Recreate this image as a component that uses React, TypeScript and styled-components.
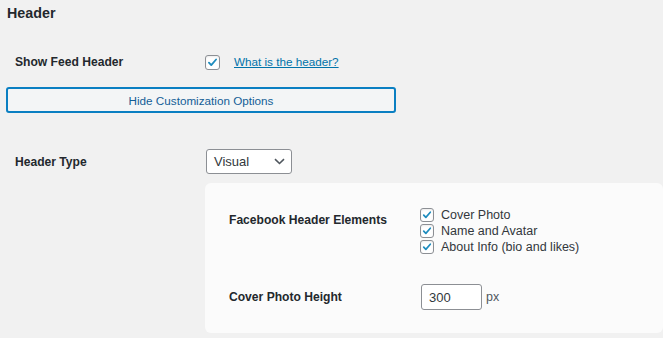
import React from 'react';
import styled, { createGlobalStyle } from 'styled-components';

const GlobalStyle = createGlobalStyle`
  html, body {
    margin: 0;
    padding: 0;
    background: #f1f1f1;
  }
  body {
    font-family: "Liberation Sans", Arial, sans-serif;
    color: #23282d;
  }
`;

const Page = styled.div`
  width: 663px;
  height: 338px;
  overflow: hidden;
  background: #f1f1f1;
  display: flex;
  flex-direction: column;
`;

const Title = styled.h3`
  margin: 4px 0 0 7px;
  font-size: 14.3px;
  line-height: 18px;
  font-weight: 700;
  color: #23282d;
`;

const Row = styled.div<{ $top: number }>`
  display: flex;
  align-items: center;
  margin-top: ${p => p.$top}px;
  padding-left: 15px;
`;

const Label = styled.div<{ $width: number; $pad?: number }>`
  width: ${p => p.$width}px;
  flex-shrink: 0;
  padding-top: ${p => p.$pad ?? 0}px;
  font-size: 12.1px;
  font-weight: 700;
  color: #23282d;
  line-height: 16px;
`;

const Box = styled.span<{ $size: number }>`
  display: inline-flex;
  align-items: center;
  justify-content: center;
  box-sizing: border-box;
  width: ${p => p.$size}px;
  height: ${p => p.$size}px;
  flex-shrink: 0;
  background: #ffffff;
  border: 1px solid #8c8f94;
  border-radius: 3px;
  box-shadow: inset 0 1px 2px rgba(0, 0, 0, 0.08);
`;

const HelpLink = styled.a`
  margin-left: 14px;
  font-size: 11.7px;
  color: #0073aa;
  text-decoration: underline;
  line-height: 16px;
`;

const ToggleButton = styled.button`
  margin: 17px 0 0 6px;
  width: 390px;
  height: 26px;
  box-sizing: border-box;
  background: #f3f5f6;
  border: 2px solid #0a7fc2;
  border-radius: 3px;
  font-family: "Liberation Sans", Arial, sans-serif;
  font-size: 11.7px;
  color: #135e96;
  padding: 0;
  text-align: center;
`;

const Select = styled.div`
  display: flex;
  align-items: center;
  justify-content: space-between;
  box-sizing: border-box;
  width: 86px;
  height: 25px;
  padding: 0 6px 0 7px;
  background: #ffffff;
  border: 1px solid #8c8f94;
  border-radius: 3px;
  font-size: 13px;
  color: #32373c;
`;

const Card = styled.div`
  margin: 9px 0 0 205px;
  width: 458px;
  height: 150px;
  flex-shrink: 0;
  box-sizing: border-box;
  background: #fbfbfb;
  border-radius: 6px;
  padding: 24px 0 0 24px;
  display: flex;
  flex-direction: column;
`;

const CardRow = styled.div<{ $top: number; $align: string }>`
  display: flex;
  align-items: ${p => p.$align};
  margin-top: ${p => p.$top}px;
`;

const CheckList = styled.div`
  display: flex;
  flex-direction: column;
`;

const CheckItem = styled.label`
  display: flex;
  align-items: center;
  height: 16px;
  font-size: 12.5px;
  color: #32373c;
  gap: 7px;
`;

const NumberInput = styled.div`
  display: flex;
  align-items: center;
  box-sizing: border-box;
  width: 61px;
  height: 26px;
  padding-left: 7px;
  background: #ffffff;
  border: 1px solid #8c8f94;
  border-radius: 3px;
  font-size: 13px;
  color: #32373c;
`;

const Unit = styled.span`
  margin-left: 4px;
  font-size: 12.5px;
  color: #50575e;
`;

const Check: React.FC<{ size: number }> = ({ size }) => (
  <Box $size={size}>
    <svg width={size - 2} height={size - 2} viewBox="0 0 20 20">
      <path
        d="M4.5 10.2l3.6 3.8 7.4-8.6"
        fill="none"
        stroke="#1e8cbe"
        strokeWidth="2.8"
        strokeLinecap="round"
        strokeLinejoin="round"
      />
    </svg>
  </Box>
);

const Chevron = () => (
  <svg width="11" height="7" viewBox="0 0 11 7">
    <path d="M1 1.2l4.5 4.3 4.5-4.3" fill="none" stroke="#50575e" strokeWidth="1.6" />
  </svg>
);

const elements = ['Cover Photo', 'Name and Avatar', 'About Info (bio and likes)'];

const App: React.FC = () => {
  return (
    <Page>
      <GlobalStyle />
      <Title>Header</Title>
      <Row $top={32}>
        <Label $width={190}>Show Feed Header</Label>
        <Check size={15} />
        <HelpLink href="#">What is the header?</HelpLink>
      </Row>
      <ToggleButton>Hide Customization Options</ToggleButton>
      <Row $top={36}>
        <Label $width={191}>Header Type</Label>
        <Select>
          <span>Visual</span>
          <Chevron />
        </Select>
      </Row>
      <Card>
        <CardRow $top={0} $align="flex-start">
          <Label $width={191} $pad={5}>Facebook Header Elements</Label>
          <CheckList>
            {elements.map(e => (
              <CheckItem key={e}>
                <Check size={14} />
                {e}
              </CheckItem>
            ))}
          </CheckList>
        </CardRow>
        <CardRow $top={29} $align="center">
          <Label $width={192}>Cover Photo Height</Label>
          <NumberInput>300</NumberInput>
          <Unit>px</Unit>
        </CardRow>
      </Card>
    </Page>
  );
};

export default App;
